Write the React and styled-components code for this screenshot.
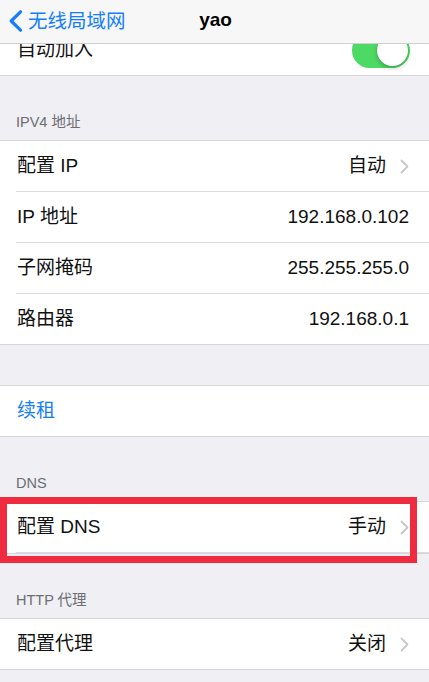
import React from 'react';
import styled, { createGlobalStyle } from 'styled-components';

const GlobalStyle = createGlobalStyle`
  html, body {
    margin: 0;
    padding: 0;
    background: #efeff4;
  }
  body {
    font-family: 'Liberation Sans', 'Noto Sans CJK SC', sans-serif;
    -webkit-font-smoothing: antialiased;
  }
`;

const sections = [
  {
    title: 'IPV4 地址',
    rows: [
      { label: '配置 IP', value: '自动', chevron: true },
      { label: 'IP 地址', value: '192.168.0.102' },
      { label: '子网掩码', value: '255.255.255.0' },
      { label: '路由器', value: '192.168.0.1' },
    ],
  },
];

const BackChevron = () => (
  <svg width='15' height='22' viewBox='0 0 15 22'>
    <path d='M12.5 1.8 L3.2 11 L12.5 20.2' fill='none' stroke='#157efb' strokeWidth='3.2' strokeLinecap='round' strokeLinejoin='round' />
  </svg>
);

const Chevron = () => (
  <svg width='9' height='15' viewBox='0 0 9 15'>
    <path d='M1.5 1.5 L7.5 7.5 L1.5 13.5' fill='none' stroke='#c7c7cc' strokeWidth='1.8' strokeLinecap='round' strokeLinejoin='round' />
  </svg>
);

const SettingsRow = ({ label, value, chevron, tint, children }) => (
  <Row>
    <Label tint={tint}>{label}</Label>
    <Detail>
      {value && <Value>{value}</Value>}
      {chevron && <Chevron />}
      {children}
    </Detail>
  </Row>
);

const App = () => {
  return (
    <>
      <GlobalStyle />
      <NavBar>
        <BackButton>
          <BackChevron />
          <span>无线局域网</span>
        </BackButton>
        <NavTitle>yao</NavTitle>
      </NavBar>
      <Page>
        <Group>
          <SettingsRow label='自动加入'>
            <Toggle>
              <Knob />
            </Toggle>
          </SettingsRow>
        </Group>

        {sections.map(section => (
          <React.Fragment key={section.title}>
            <SectionHeader>{section.title}</SectionHeader>
            <Group>
              {section.rows.map(row => (
                <SettingsRow key={row.label} {...row} />
              ))}
            </Group>
          </React.Fragment>
        ))}

        <Spacer />
        <Group>
          <SettingsRow label='续租' tint='#157efb' />
        </Group>

        <SectionHeader>DNS</SectionHeader>
        <Group>
          <SettingsRow label='配置 DNS' value='手动' chevron />
          <Highlight />
        </Group>

        <SectionHeader>HTTP 代理</SectionHeader>
        <Group>
          <SettingsRow label='配置代理' value='关闭' chevron />
        </Group>
      </Page>
    </>
  );
};

export default App;

const NavBar = styled.header`
  position: fixed;
  top: 0;
  left: 0;
  right: 0;
  z-index: 10;
  height: 43px;
  display: flex;
  align-items: center;
  justify-content: center;
  background: #f7f7f8;
  border-bottom: 1px solid #cfcfd3;
`;

const BackButton = styled.div`
  position: absolute;
  left: 8px;
  top: 0;
  height: 42px;
  display: flex;
  align-items: center;
  gap: 5px;
  color: #157efb;
  font-size: 19.5px;
  line-height: 22px;
`;

const NavTitle = styled.div`
  margin-top: -3px;
  font-size: 19px;
  font-weight: 700;
  color: #000;
  padding-left: 2px;
`;

const Page = styled.main`
  padding-top: 24px;
  padding-bottom: 40px;
`;

const Group = styled.section`
  position: relative;
  background: #fff;
  border-top: 1px solid #d6d6da;
  border-bottom: 1px solid #d6d6da;
`;

const SectionHeader = styled.div`
  height: 64px;
  box-sizing: border-box;
  display: flex;
  align-items: flex-end;
  padding: 0 16px 9px;
  font-size: 14.5px;
  line-height: 18px;
  color: #6d6d72;
`;

const Spacer = styled.div`
  height: 40px;
`;

const Row = styled.div`
  height: 50px;
  margin-left: 16px;
  padding-right: 20px;
  display: flex;
  align-items: center;
  justify-content: space-between;
  border-bottom: 1px solid #dcdce0;
  &:last-of-type {
    border-bottom: none;
  }
`;

const Label = styled.span`
  font-size: 19px;
  line-height: 24px;
  color: ${({ tint }) => tint || '#111'};
  padding-left: 1px;
`;

const Detail = styled.div`
  display: flex;
  align-items: center;
  gap: 14px;
`;

const Value = styled.span`
  font-size: 19px;
  line-height: 24px;
  color: #111;
`;

const Toggle = styled.div`
  width: 58px;
  height: 35px;
  margin-top: 1px;
  margin-right: -1px;
  border-radius: 18px;
  background: #4cd964;
  display: flex;
  align-items: center;
  justify-content: flex-end;
  padding: 2px;
  box-sizing: border-box;
`;

const Knob = styled.div`
  width: 31px;
  height: 31px;
  border-radius: 50%;
  background: #fff;
  box-shadow: 0 2px 4px rgba(0, 0, 0, 0.25), 0 0 1px rgba(0, 0, 0, 0.2);
`;

const Highlight = styled.div`
  position: absolute;
  top: -5px;
  left: 0;
  right: 12px;
  bottom: -10px;
  border: 7px solid #ef2b3f;
  pointer-events: none;
`;
